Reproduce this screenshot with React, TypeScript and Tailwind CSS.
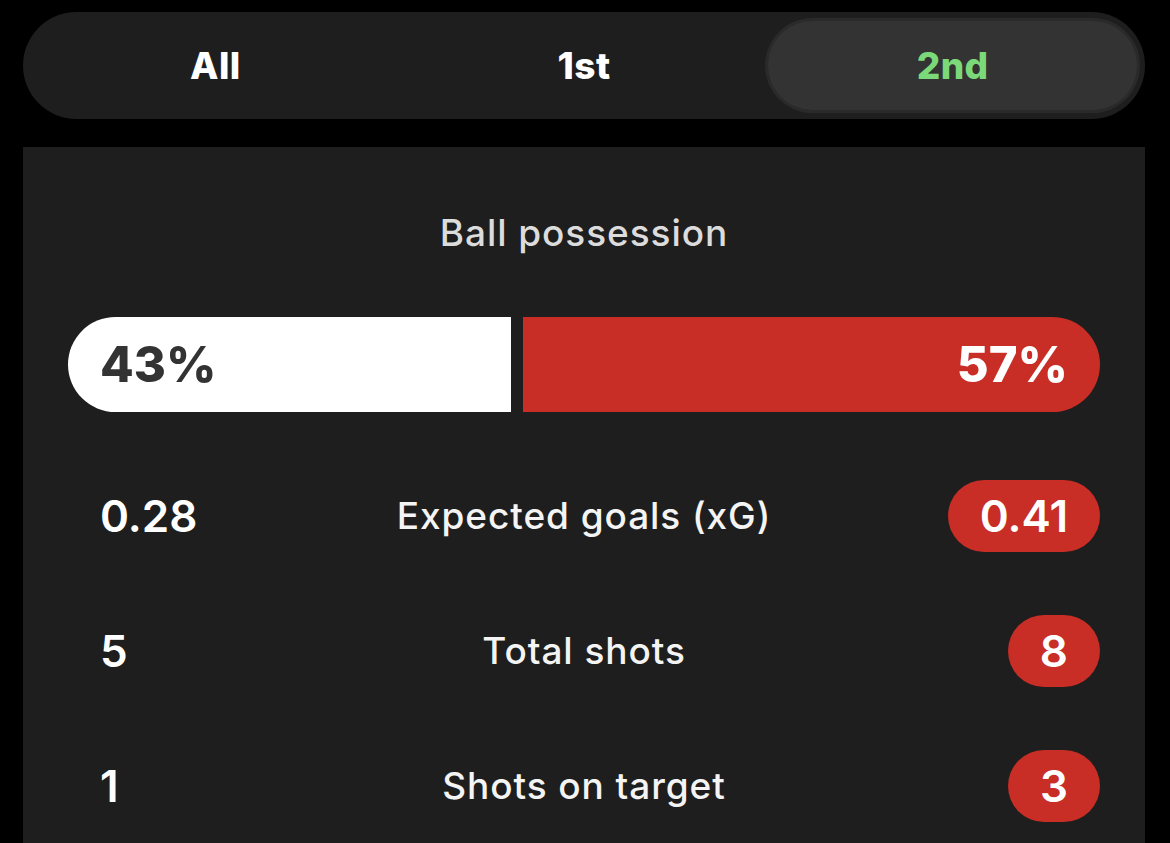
import React from 'react';

const tabs = ['All', '1st', '2nd'];

const rows = [
  { home: '0.28', label: 'Expected goals (xG)', away: '0.41' },
  { home: '5', label: 'Total shots', away: '8' },
  { home: '1', label: 'Shots on target', away: '3' },
];

export default function App() {
  const active = 2;
  const home = 43;
  const away = 57;

  return (
    <div
      className="w-full h-[843px] overflow-hidden bg-black pt-[12px] pl-[23px] pr-[25px]"
      style={{ fontFamily: 'Inter, "Noto Sans", sans-serif' }}
    >
      {/* Period tabs */}
      <div className="h-[107px] rounded-full bg-[#1e1e1e] grid grid-cols-3 p-[9px] pl-[8px] pr-[8px]">
        {tabs.map((t, i) => (
          <div
            key={t}
            className={
              i === active
                ? 'flex items-center justify-center rounded-full bg-[#333333] ring-[3px] ring-[#2a2a2a] text-[#7bd97a] text-[37px] font-extrabold tracking-[0.01em]'
                : 'flex items-center justify-center text-white text-[37px] font-extrabold tracking-[0.01em]'
            }
          >
            {t}
          </div>
        ))}
      </div>

      {/* Stats panel */}
      <div className="mt-[28px] bg-[#1e1e1e] px-[45px] h-[800px]">
        <div className="pt-[68px] text-center text-[37px] leading-[36px] font-medium tracking-[0.025em] text-[#dcdcdc]">
          Ball possession
        </div>

        <div className="mt-[66px] h-[95px] flex gap-[12px]">
          <div
            className="min-w-0 bg-white rounded-l-[48px] flex items-center pl-[32px] text-[#333333] text-[49px] font-extrabold"
            style={{ flex: `${home} 1 0px` }}
          >
            {home}%
          </div>
          <div
            className="min-w-0 bg-[#c82d26] rounded-r-[48px] flex items-center justify-end pr-[32px] text-white text-[49px] font-extrabold"
            style={{ flex: `${away} 1 0px` }}
          >
            {away}%
          </div>
        </div>

        <div className="mt-[68px] flex flex-col gap-[63px]">
          {rows.map((r) => (
            <div key={r.label} className="h-[72px] grid grid-cols-[1fr_auto_1fr] items-center">
              <div className="pl-[32px] text-white text-[44px] font-semibold">{r.home}</div>
              <div className="text-center text-[#f4f4f4] text-[37px] font-medium tracking-[0.025em]">{r.label}</div>
              <div className="flex justify-end">
                <div className="h-[72px] min-w-[90px] px-[32px] rounded-full bg-[#c82d26] flex items-center justify-center text-white text-[44px] font-semibold">
                  {r.away}
                </div>
              </div>
            </div>
          ))}
        </div>
      </div>
    </div>
  );
}
